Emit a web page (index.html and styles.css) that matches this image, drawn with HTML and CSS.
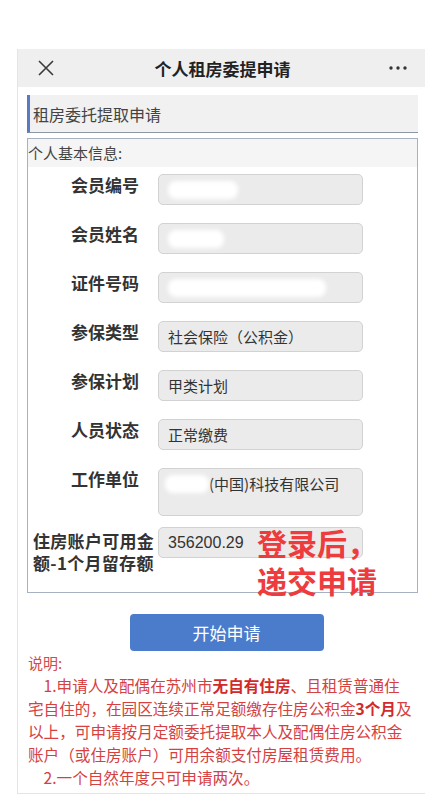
FILE: index.html
```html
<!DOCTYPE html>
<html lang="zh-CN">
<head>
  <meta charset="UTF-8" />
  <meta name="viewport" content="width=device-width, initial-scale=1.0">
  <title>个人租房委提申请</title>
  <link rel="stylesheet" href="styles.css">
</head>
<body>

  <div class="phone">
    <!-- 顶部导航 -->
    <div class="navbar">
      <svg class="nav-close" width="16" height="16" viewBox="0 0 16 16">
        <path d="M1 1L15 15M15 1L1 15" stroke="#3a3a3a" stroke-width="1.6" fill="none" />
      </svg>
      <div class="nav-title">个人租房委提申请</div>
      <svg class="nav-more" width="18" height="4" viewBox="0 0 18 4">
        <circle cx="2" cy="2" r="1.7" fill="#333" />
        <circle cx="9" cy="2" r="1.7" fill="#333" />
        <circle cx="16" cy="2" r="1.7" fill="#333" />
      </svg>
    </div>

    <div class="content">
      <div class="section-title">租房委托提取申请</div>

      <!-- 个人基本信息 -->
      <div class="info-box">
        <div class="info-head">个人基本信息:</div>

        <div class="form-row">
          <div class="label">会员编号</div>
          <div class="field"><span class="mask" style="width: 70px;"></span></div>
        </div>
        <div class="form-row">
          <div class="label">会员姓名</div>
          <div class="field"><span class="mask" style="width: 56px;"></span></div>
        </div>
        <div class="form-row">
          <div class="label">证件号码</div>
          <div class="field"><span class="mask" style="width: 158px;"></span></div>
        </div>
        <div class="form-row">
          <div class="label">参保类型</div>
          <div class="field">社会保险（公积金）</div>
        </div>
        <div class="form-row">
          <div class="label">参保计划</div>
          <div class="field">甲类计划</div>
        </div>
        <div class="form-row">
          <div class="label">人员状态</div>
          <div class="field">正常缴费</div>
        </div>
        <div class="form-row row-tall">
          <div class="label">工作单位</div>
          <div class="field field-tall"><span class="mask" style="width: 44px;"></span>(中国)科技有限公司</div>
        </div>
        <div class="form-row">
          <div class="label label-long">住房账户可用金额-1个月留存额</div>
          <div class="field field-num">356200.29</div>
        </div>

        <div class="stamp">登录后，<br>递交申请</div>
      </div>

      <div class="btn-wrap">
        <button class="btn-apply">开始申请</button>
      </div>

      <!-- 说明 -->
      <div class="notes">
        <div class="notes-title">说明:</div>
        <p>1.申请人及配偶在苏州市<b>无自有住房</b>、且租赁普通住宅自住的，在园区连续正常足额缴存住房公积金<b>3个月</b>及以上，可申请按月定额委托提取本人及配偶住房公积金账户（或住房账户）可用余额支付房屋租赁费用。</p>
        <p>2.一个自然年度只可申请两次。</p>
      </div>
    </div>
  </div>

</body>
</html>
```

FILE: styles.css
```css
* {
  box-sizing: border-box;
}

body {
  margin: 0;
  background-color: #fff;
  font-family: "Noto Sans CJK SC", "Noto Sans", sans-serif;
  color: #333;
}

.phone {
  margin: 49px 0 0 17px;
  height: 745px;
  border-left: 1px solid #e4e4e4;
  border-bottom: 1px solid #e4e4e4;
  overflow: hidden;
}

.navbar {
  height: 38px;
  background-color: #efefef;
  display: flex;
  align-items: center;
  padding: 0 18px 0 20px;
}

.nav-close {
  flex: none;
}

.nav-title {
  flex: 1;
  text-align: center;
  font-size: 17px;
  font-weight: bold;
  color: #222;
  padding-left: 2px;
}

.nav-more {
  flex: none;
}

.content {
  padding: 8px 7px 0 9px;
}

.section-title {
  height: 38px;
  line-height: 38px;
  background-color: #f1f1f1;
  border-left: 3px solid #5a7bc4;
  border-bottom: 1px solid #8c96a6;
  padding-left: 3px;
  font-size: 16px;
  color: #444;
}

.info-box {
  position: relative;
  margin-top: 5px;
  border: 1px solid #a7b1c1;
}

.info-head {
  height: 28px;
  line-height: 28px;
  background-color: #f5f5f5;
  font-size: 15px;
  color: #444;
  margin-bottom: 7px;
}

.form-row {
  display: flex;
  align-items: flex-start;
  padding-left: 5px;
  margin-bottom: 18px;
}

.row-tall {
  margin-bottom: 11px;
}

.label {
  flex: none;
  width: 125px;
  padding-right: 19px;
  text-align: right;
  font-size: 17px;
  font-weight: bold;
  line-height: 22px;
  color: #333;
}

.label-long {
  padding: 0;
  margin-top: 3px;
  text-align: left;
  letter-spacing: 0.3px;
}

.field {
  flex: none;
  width: 205px;
  height: 31px;
  line-height: 29px;
  padding: 0 9px;
  background-color: #ebebeb;
  border: 1px solid #d2d2d2;
  border-radius: 5px;
  font-size: 15px;
  color: #333;
  white-space: nowrap;
  overflow: hidden;
}

.field-tall {
  height: 48px;
  padding-left: 6px;
}

.field-num {
  font-family: "Liberation Sans", "Noto Sans CJK SC", sans-serif;
  font-size: 16px;
}

.mask {
  display: inline-block;
  vertical-align: middle;
  height: 18px;
  margin-top: -3px;
  background-color: #fff;
  border-radius: 8px;
  filter: blur(2px);
}

.stamp {
  position: absolute;
  left: 229px;
  top: 384px;
  font-size: 30px;
  font-weight: bold;
  line-height: 38px;
  color: #ee3b3d;
  white-space: nowrap;
}

.btn-wrap {
  display: flex;
  justify-content: center;
  margin-top: 21px;
}

.btn-apply {
  width: 194px;
  height: 37px;
  border: none;
  border-radius: 4px;
  background-color: #4b7bcb;
  color: #fff;
  font-family: inherit;
  font-size: 17px;
  margin-left: 8px;
}

.notes {
  width: 388px;
  padding-left: 1px;
  font-size: 15.6px;
  line-height: 23px;
  color: #d6403f;
}

.notes-title {
  font-size: 15px;
  color: #d44a48;
}

.notes p {
  margin: 0;
  text-indent: 1em;
}

.notes b {
  color: #d22a2a;
}
```
